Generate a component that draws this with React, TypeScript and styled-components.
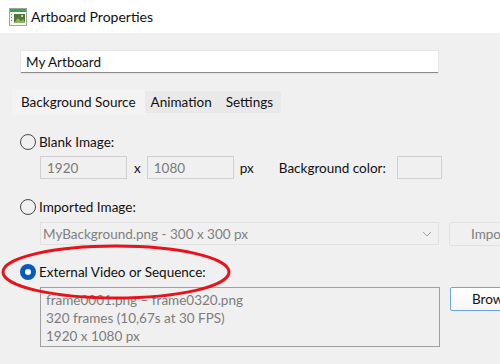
import React from "react";
import styled, { createGlobalStyle } from "styled-components";

const GlobalStyle = createGlobalStyle`
  html, body {
    margin: 0;
    padding: 0;
    background: #f0f0f0;
  }
  body {
    font-family: "Lato", "Noto Sans", sans-serif;
    font-size: 13.5px;
    color: #1a1a1a;
  }
`;

const Window = styled.div`
  position: relative;
  width: 500px;
  height: 364px;
  overflow: hidden;
  background: #f0f0f0;
`;

const TitleBar = styled.div`
  height: 33px;
  background: #ffffff;
  display: flex;
  align-items: center;
  padding-left: 9px;
  gap: 4px;
  font-size: 14px;
  color: #111;
`;

const Body = styled.div`
  padding: 18px 0 0 21px;
`;

const NameInput = styled.div`
  width: 412px;
  height: 21px;
  background: #ffffff;
  border-bottom: 1px solid #8a8a8a;
  box-shadow: 0 0 0 1px #e6e6e6;
  display: flex;
  align-items: center;
  padding-left: 5px;
  color: #111;
`;

const TabBar = styled.div`
  display: flex;
  align-items: flex-end;
  margin: 16px 0 0 -9px;
  height: 26px;
`;

const Tab = styled.div<{ $active?: boolean }>`
  height: ${(p) => (p.$active ? 26 : 22)}px;
  padding: ${(p) => (p.$active ? "0 9px" : "0 8px 0 6px")};
  display: flex;
  align-items: center;
  background: ${(p) => (p.$active ? "#f3f3f3" : "#e9e9e9")};
  color: #111;
  margin-bottom: ${(p) => (p.$active ? 0 : 2)}px;
`;

const Panel = styled.div`
  margin: 19px 0 0 -1px;
  display: flex;
  flex-direction: column;
`;

const RadioRow = styled.label<{ $gap: number }>`
  display: flex;
  align-items: center;
  gap: 3px;
  height: 16px;
  margin-top: ${(p) => p.$gap}px;
  color: #111;
`;

const Radio = styled.span<{ $checked?: boolean }>`
  box-sizing: border-box;
  width: 16px;
  height: 16px;
  border-radius: 50%;
  border: ${(p) => (p.$checked ? "none" : "1px solid #4a4a4a")};
  background: ${(p) => (p.$checked ? "#0a5bb5" : "transparent")};
  display: flex;
  align-items: center;
  justify-content: center;

  &::after {
    content: "";
    display: ${(p) => (p.$checked ? "block" : "none")};
    width: 6px;
    height: 6px;
    border-radius: 50%;
    background: #ffffff;
  }
`;

const FieldRow = styled.div<{ $gap: number }>`
  display: flex;
  align-items: center;
  margin: ${(p) => p.$gap}px 0 0 20px;
  height: 23px;
  & > * {
    flex-shrink: 0;
  }
`;

const NumberBox = styled.div<{ $w: number }>`
  box-sizing: border-box;
  width: ${(p) => p.$w}px;
  height: 23px;
  border: 1px solid #cfcfcf;
  padding-left: 6px;
  display: flex;
  align-items: center;
  color: #7a7a7a;
`;

const Unit = styled.span<{ $ml: number; $mr: number }>`
  margin: 0 ${(p) => p.$mr}px 0 ${(p) => p.$ml}px;
  color: #111;
`;

const Select = styled.div`
  box-sizing: border-box;
  width: 399px;
  height: 23px;
  border: 1px solid #e2e2e2;
  padding: 0 6px 0 2px;
  display: flex;
  align-items: center;
  justify-content: space-between;
  color: #808080;
`;

const SideButton = styled.div<{ $enabled?: boolean }>`
  box-sizing: border-box;
  margin-left: 10px;
  width: 80px;
  height: 24px;
  flex-shrink: 0;
  border: 1px solid ${(p) => (p.$enabled ? "#6aa6e4" : "#e2e2e2")};
  border-radius: 2px;
  background: ${(p) => (p.$enabled ? "linear-gradient(#ffffff, #f6f6f6)" : "#f0f0f0")};
  padding-left: 21px;
  display: flex;
  align-items: center;
  color: ${(p) => (p.$enabled ? "#111" : "#808080")};
`;

const InfoRow = styled.div`
  display: flex;
  align-items: flex-start;
  margin: 7px 0 0 20px;
  & > * {
    flex-shrink: 0;
  }
`;

const InfoBox = styled.div`
  box-sizing: border-box;
  width: 400px;
  height: 60px;
  border: 1px solid #a0a0a0;
  overflow: hidden;
  padding: 3px 0 0 5px;
  color: #7c7c7c;
  line-height: 18px;
`;

const Highlight = styled.svg`
  position: absolute;
  left: 0;
  top: 240px;
  pointer-events: none;
`;

const AppIcon = () => (
  <svg width="18" height="18" viewBox="0 0 18 18">
    <rect x="0.5" y="0.5" width="17" height="17" fill="#ffffff" stroke="#9aa79a" />
    <rect x="1" y="1" width="16" height="3" fill="#2eaa4a" />
    <rect x="1" y="4" width="3" height="13" fill="#eef3ee" />
    <rect x="2" y="6" width="1" height="1" fill="#3a8ad8" />
    <rect x="2" y="9" width="1" height="1" fill="#3a8ad8" />
    <rect x="2" y="12" width="1" height="1" fill="#3a8ad8" />
    <rect x="5" y="6" width="11" height="9" fill="#55733c" />
    <path d="M5 15 L9 10 L12 13 L14 11 L16 14 L16 15 Z" fill="#8fb35a" />
    <rect x="12" y="7" width="2" height="2" fill="#c6d98a" />
  </svg>
);

const Chevron = () => (
  <svg width="10" height="6" viewBox="0 0 10 6">
    <path d="M1 1 L5 5 L9 1" fill="none" stroke="#a0a0a0" strokeWidth="1" />
  </svg>
);

export default function App() {
  return (
    <Window>
      <GlobalStyle />
      <TitleBar>
        <AppIcon />
        <span>Artboard Properties</span>
      </TitleBar>
      <Body>
        <NameInput>My Artboard</NameInput>
        <TabBar>
          <Tab $active>Background Source</Tab>
          <Tab>Animation</Tab>
          <Tab>Settings</Tab>
        </TabBar>
        <Panel>
          <RadioRow $gap={0}>
            <Radio />
            Blank Image:
          </RadioRow>
          <FieldRow $gap={6}>
            <NumberBox $w={87}>1920</NumberBox>
            <Unit $ml={7} $mr={6}>x</Unit>
            <NumberBox $w={87}>1080</NumberBox>
            <Unit $ml={6} $mr={0}>px</Unit>
            <Unit $ml={25} $mr={11}>Background color:</Unit>
            <NumberBox $w={45} />
          </FieldRow>
          <RadioRow $gap={20}>
            <Radio />
            Imported Image:
          </RadioRow>
          <FieldRow $gap={7}>
            <Select>
              <span>MyBackground.png - 300 x 300 px</span>
              <Chevron />
            </Select>
            <SideButton>Import...</SideButton>
          </FieldRow>
          <RadioRow $gap={19}>
            <Radio $checked />
            External Video or Sequence:
          </RadioRow>
          <InfoRow>
            <InfoBox>
              <div>frame0001.png – frame0320.png</div>
              <div>320 frames (10,67s at 30 FPS)</div>
              <div>1920 x 1080 px</div>
            </InfoBox>
            <SideButton $enabled>Browse...</SideButton>
          </InfoRow>
        </Panel>
      </Body>
      <Highlight width="240" height="64" viewBox="0 0 240 64">
        <ellipse cx="116" cy="32" rx="113" ry="26" fill="none" stroke="#e8121c" strokeWidth="3" />
      </Highlight>
    </Window>
  );
}
